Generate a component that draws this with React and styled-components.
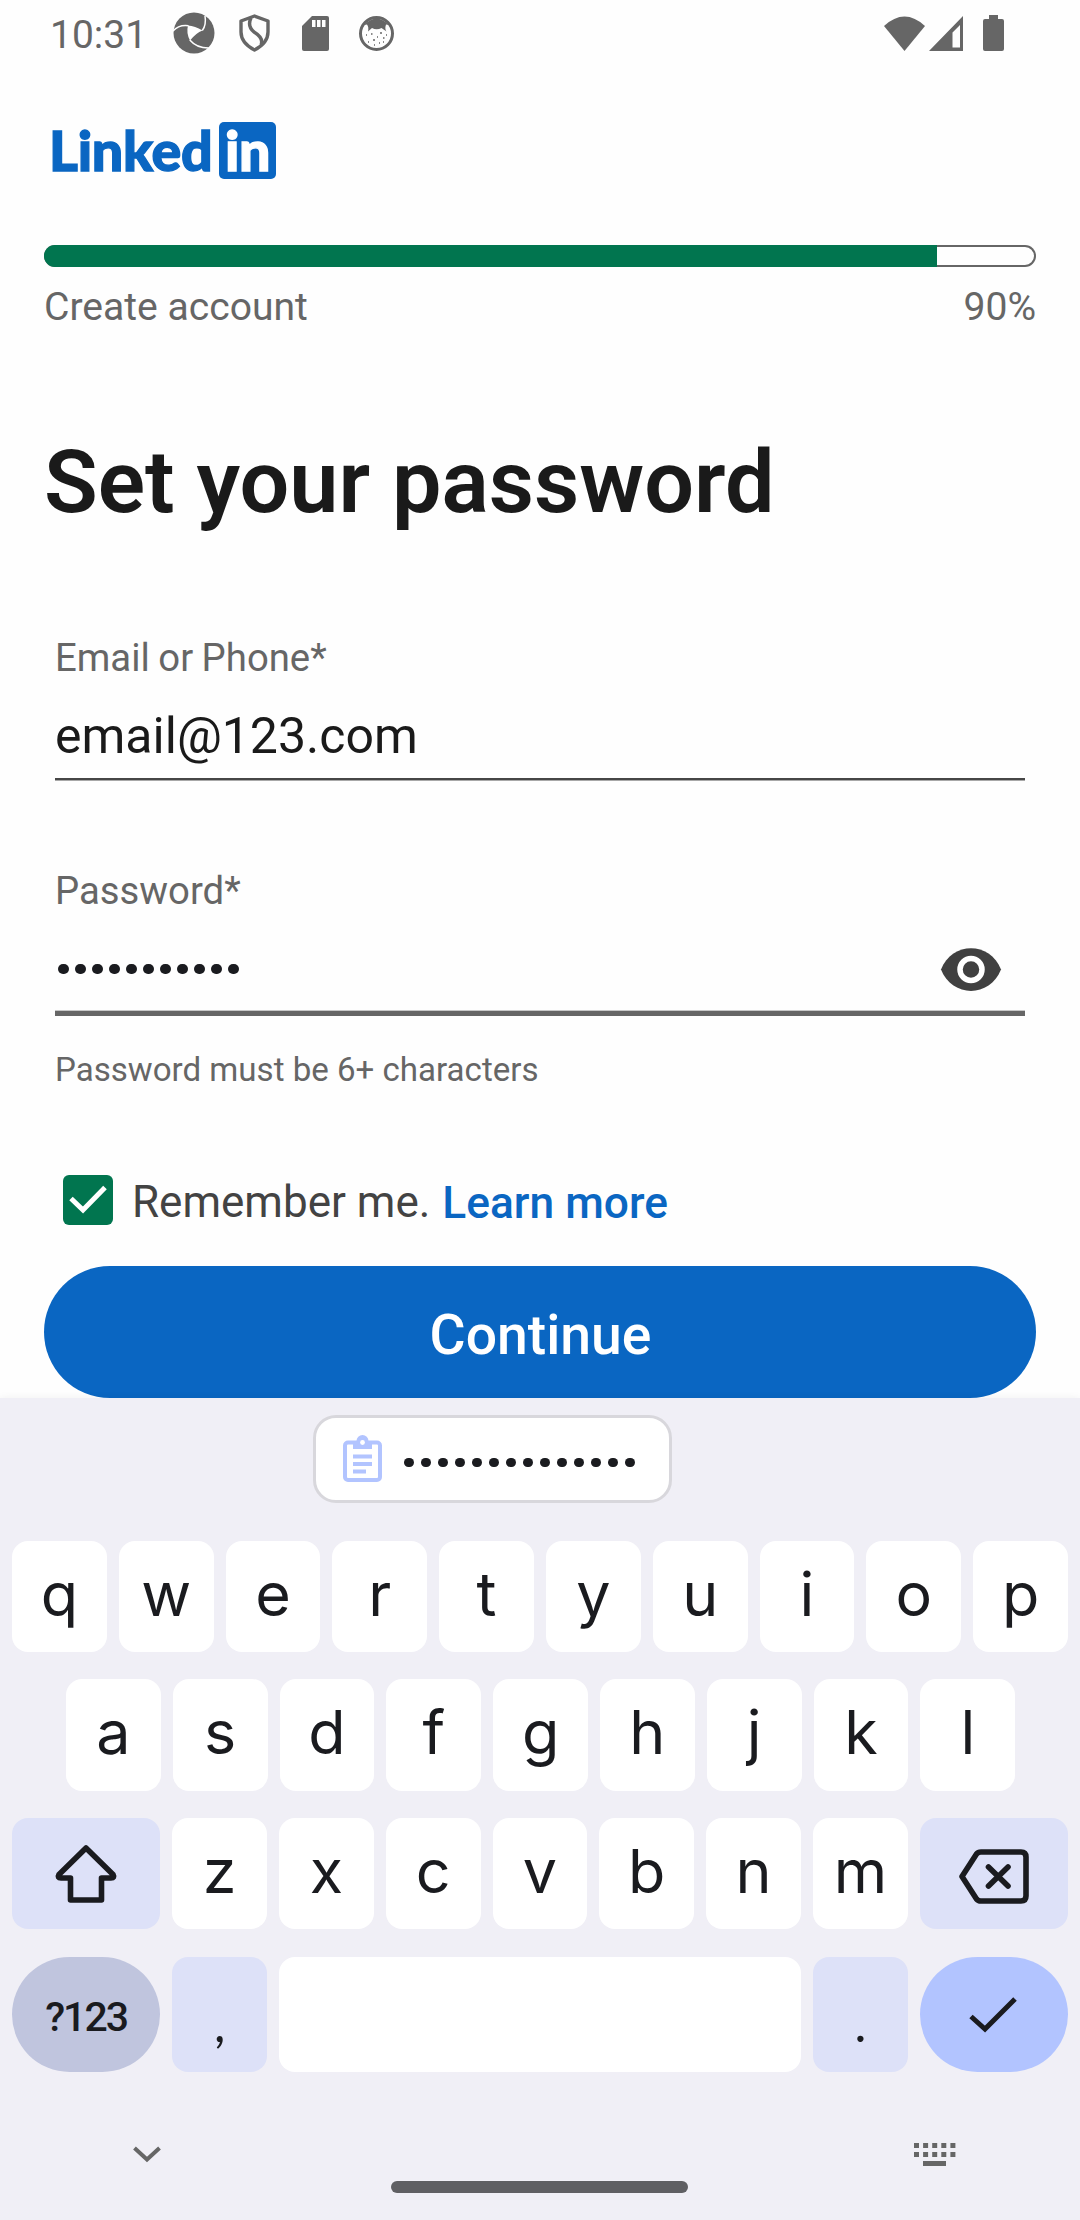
import React from 'react';
import styled, { createGlobalStyle } from 'styled-components';

const GlobalStyle = createGlobalStyle`
  * { box-sizing: border-box; }
  body { margin: 0; background: #fefefe; font-family: Roboto, "Liberation Sans", sans-serif; }
  svg { display: block; flex: none; overflow: visible; }
  button { border: 0; padding: 0; margin: 0; font-family: inherit; }
`;

const Screen = styled.main`
  width: 1080px;
  height: 2220px;
  overflow: hidden;
  display: flex;
  flex-direction: column;
  color: #1a1a1a;
`;

const StatusBar = styled.header`
  height: 66px;
  padding: 0 76px 0 50px;
  display: flex;
  align-items: center;
  justify-content: space-between;
  color: #666;
`;

const StatusGroup = styled.div`
  display: flex;
  align-items: center;
  height: 66px;
`;

const Clock = styled.time`
  width: 123px;
  font-size: 39px;
  line-height: 46px;
  padding-top: 3px;
`;

const Page = styled.section`
  height: 1332px;
  padding: 56px 44px 0;
  display: flex;
  flex-direction: column;
`;

const Brand = styled.div`
  height: 57px;
  margin-left: 8px;
  display: flex;
  color: #0a66c2;
  font-family: Lato, "Open Sans", sans-serif;
  font-weight: 900;
  font-size: 55.5px;
  line-height: 55px;
  -webkit-text-stroke: 1.3px currentColor;
`;

const BrandWord = styled.span`
  width: 167px;
  margin-left: -3px;
  margin-right: 3px;
  letter-spacing: -0.3px;
`;

const BrandTile = styled.span`
  width: 57px;
  height: 57px;
  border-radius: 5px;
  background: #0a66c2;
  color: #fff;
  text-align: center;
  letter-spacing: -0.5px;
`;

const Progress = styled.div`
  margin-top: 66px;
  height: 22px;
  border-radius: 11px;
  overflow: hidden;
  box-shadow: inset 0 0 0 2px #666;
`;

const ProgressFill = styled.div`
  width: 90%;
  height: 22px;
  background: #01754f;
`;

const ProgressLabels = styled.div`
  margin-top: 17px;
  display: flex;
  justify-content: space-between;
  font-size: 39.1px;
  line-height: 46px;
  color: #666;
`;

const Title = styled.h1`
  margin: 100px 0 0 0;
  font-size: 88px;
  line-height: 104px;
  font-weight: 600;
`;

const Field = styled.div`
  margin: ${(p) => p.$gap}px 11px 0;
  height: ${(p) => p.$height}px;
  display: flex;
  flex-direction: column;
  border-bottom: ${(p) => p.$line};
  box-shadow: ${(p) => p.$edge};
`;

const FieldLabel = styled.label`
  font-size: 38.3px;
  line-height: 46px;
  word-spacing: -1px;
  color: #666;
`;

const FieldRow = styled.div`
  margin-top: 25px;
  height: 60px;
  padding-right: 24px;
  display: flex;
  align-items: center;
  justify-content: space-between;
  font-size: 50px;
  line-height: 60px;
`;

const Dots = styled.div`
  display: flex;
  margin: ${(p) => p.$offset || '0'};
  gap: ${(p) => 17.02 - p.$size}px;
`;

const Dot = styled.i`
  width: ${(p) => p.$size}px;
  height: ${(p) => p.$size}px;
  border-radius: 50%;
  background: #1a1b1f;
`;

const Helper = styled.p`
  margin: 34px 11px 0;
  font-size: 33.1px;
  line-height: 40px;
  color: #666;
`;

const Remember = styled.div`
  margin: 85px 0 0 19px;
  height: 50px;
  display: flex;
  align-items: center;
  font-size: 44px;
  line-height: 50px;
  color: #434343;
`;

const Checkbox = styled.span`
  width: 50px;
  height: 50px;
  border-radius: 6px;
  margin-right: 19px;
  background: #01754f;
`;

const RememberText = styled.span`
  padding-top: 4px;
`;

const Link = styled.a`
  margin-left: 12px;
  padding-top: 5px;
  color: #0a66c2;
  font-size: 44.3px;
  font-weight: 500;
`;

const ContinueButton = styled.button`
  margin-top: 41px;
  height: 132px;
  flex: none;
  border-radius: 66px;
  background: #0a66c2;
  color: #fff;
  font-size: 55.3px;
  line-height: 64px;
  font-weight: 500;
  padding: 8px 0 0 1px;
`;

const Keyboard = styled.section`
  height: 822px;
  position: relative;
  background: #f0eff6;
  box-shadow: 0 0 8px rgba(0, 0, 0, 0.06);
  padding: 17px 12px 0;
  display: flex;
  flex-direction: column;
  align-items: stretch;
  color: #1a1b1f;
`;

const ClipSuggestion = styled.button`
  margin-left: 301px;
  width: 359px;
  height: 88px;
  flex: none;
  border: 3px solid #d8d7dc;
  border-radius: 23px;
  background: #fff;
  padding-left: 27px;
  display: flex;
  align-items: center;
  gap: 22px;
`;

const KeyRows = styled.div`
  margin-top: 37.5px;
  display: flex;
  flex-direction: column;
  gap: 27.1px;
`;

const KeyRow = styled.div`
  height: ${(p) => p.$height || 111.6}px;
  padding: 0 ${(p) => p.$inset || 0}px;
  display: flex;
  gap: 12px;
`;

const keyColors = { plain: '#fff', soft: '#dde1f8', mode: '#c0c5de', enter: '#b2c4ff' };

const Key = styled.button`
  width: ${(p) => p.$width || 94.8}px;
  flex: ${(p) => (p.$grow ? '1 1 0' : 'none')};
  height: 100%;
  border-radius: ${(p) => (p.$pill ? 58 : 16)}px;
  background: ${(p) => keyColors[p.$tone || 'plain']};
  color: #1a1b1f;
  display: flex;
  align-items: center;
  justify-content: center;
  font-family: ${(p) => p.$font || 'Inter'}, sans-serif;
  font-weight: ${(p) => (p.$small ? 500 : 400)};
  font-size: ${(p) => p.$size || 61}px;
  line-height: 80px;
  letter-spacing: ${(p) => (p.$small ? -2 : 0)}px;
  padding-top: ${(p) => p.$drop || 0}px;
  padding-bottom: ${(p) => p.$lift || 0}px;
`;

const NavBar = styled.footer`
  margin-top: 71px;
  height: 50.5px;
  padding: 0 112px 0 121px;
  display: grid;
  grid-template-columns: 258px 297px 1fr;
`;

const NavLeft = styled.div`
  padding-top: 3px;
`;

const HomeHandle = styled.div`
  align-self: end;
  height: 12px;
  border-radius: 6px;
  background: #5f5f63;
`;

const NavRight = styled.div`
  display: flex;
  justify-content: flex-end;
`;

const Gap = styled.span`
  width: ${(p) => p.$w}px;
`;

function Aperture() {
  return (
    <svg width="42" height="42" viewBox="0 0 42 42">
      <circle cx="21" cy="21" r="20.5" fill="#666" />
      <path d="M15 13.5Q22 14 29.500 18.500Q23 21 17 28.500Q13 21 15 13.500Z" fill="#fff" />
      <g fill="none" stroke="#fff" strokeWidth="1.5">
        <path d="M0 19Q6 12.500 15.500 13.800M32 4Q33.500 13 29.300 18.500M16.800 28Q24 36.500 37 36" />
      </g>
    </svg>
  );
}

function Shield() {
  return (
    <svg width="31" height="38" viewBox="0 0 31 38" fill="none" stroke="#666" strokeWidth="3.4" strokeLinejoin="round">
      <path d="M15.5 2L29 7V18Q29 29 15.5 36Q2 29 2 18V7Z" />
      <path d="M12 4Q8 12 15 18Q25 24 22 31" />
    </svg>
  );
}

function SdCard() {
  return (
    <svg width="27" height="35" viewBox="0 0 27 35">
      <path d="M10 0H25Q27 0 27 2V33Q27 35 25 35H2Q0 35 0 33V10Z" fill="#666" />
      <path d="M10 4H13.5V11H10ZM15 4H18.5V11H15ZM20 4H23.5V11H20Z" fill="#fff" />
    </svg>
  );
}

function Face() {
  return (
    <svg width="35" height="35" viewBox="0 0 35 35">
      <circle cx="17.5" cy="17.5" r="16" fill="none" stroke="#666" strokeWidth="3" />
      <path d="M5 9Q17.500 -4 30 9L27 8.500Q25.500 13 27.500 15.500L22.500 12Q17.500 14.500 13 12L9 15.500Q10 11 8 8.500Z" fill="#666" />
      <path d="M7 19h1M12 18h1.500M21 17h2M14 24h2M24 22h1.500M9 26h1M20 27h1M18 21h1M27 19h1M15 29h1M24 26h1" stroke="#666" strokeWidth="1.3" />
    </svg>
  );
}

function Clipboard() {
  return (
    <svg width="39" height="46" viewBox="0 0 39 46">
      <rect x="2" y="6.5" width="35" height="37.500" rx="3" fill="none" stroke="#b2c4ff" strokeWidth="4" />
      <path d="M10 13V5H13.5A6 6 0 0 1 25.5 5H29V13Z" fill="#b2c4ff" />
      <circle cx="19.5" cy="6.5" r="2.4" fill="#fff" />
      <path d="M10 20.500H29M10 28H29M10 35.500H23" stroke="#b2c4ff" strokeWidth="4" />
    </svg>
  );
}

function DotRun({ count, size, offset }) {
  return (
    <Dots $size={size} $offset={offset}>
      {Array.from({ length: count }, (_, i) => <Dot key={i} $size={size} />)}
    </Dots>
  );
}

const BackspaceIcon = styled.svg`
  margin-top: 5px;
`;

const letters = (text) => text.split('').map((c) => <Key key={c} $lift={5}>{c}</Key>);

export default function App() {
  return (
    <Screen>
      <GlobalStyle />
      <StatusBar>
        <StatusGroup>
          <Clock>10:31</Clock>
          <Aperture />
          <Gap $w={24} />
          <Shield />
          <Gap $w={32} />
          <SdCard />
          <Gap $w={30} />
          <Face />
        </StatusGroup>
        <StatusGroup>
          <svg width="41" height="35" viewBox="0 0 41 35"><path d="M0 10Q20.500 -9 41 10L20.500 35Z" fill="#666" /></svg>
          <Gap $w={4} />
          <svg width="34" height="35" viewBox="0 0 34 35">
            <path fillRule="evenodd" d="M34 0V35H0ZM31 9L23.500 16.500V31.500H31Z" fill="#666" />
          </svg>
          <Gap $w={20} />
          <svg width="21" height="36" viewBox="0 0 21 36">
            <path d="M6 0H15V4H19Q21 4 21 6V34Q21 36 19 36H2Q0 36 0 34V6Q0 4 2 4H6Z" fill="#666" />
          </svg>
        </StatusGroup>
      </StatusBar>

      <Page>
        <Brand>
          <BrandWord>Linked</BrandWord>
          <BrandTile>in</BrandTile>
        </Brand>
        <Progress><ProgressFill /></Progress>
        <ProgressLabels><span>Create account</span><span>90%</span></ProgressLabels>
        <Title>Set your password</Title>
        <Field $gap={101} $height={145} $line="2px solid #464646" $edge="0 1px 0 #a8a8a8">
          <FieldLabel>Email or Phone*</FieldLabel>
          <FieldRow>email@123.com</FieldRow>
        </Field>
        <Field $gap={88} $height={148} $line="5px solid #666" $edge="inset 0 -1px 0 #c8c8c8">
          <FieldLabel>Password*</FieldLabel>
          <FieldRow>
            <DotRun count={11} size={10.6} offset="0 0 0 3px" />
            <svg width="60" height="43" viewBox="0 0 60 43">
              <path d="M0 21.500C11 -7 49 -7 60 21.500C49 50 11 50 0 21.500Z" fill="#404040" />
              <circle cx="30" cy="21.500" r="11" fill="#404040" stroke="#fff" strokeWidth="5.500" />
            </svg>
          </FieldRow>
        </Field>
        <Helper>Password must be 6+ characters</Helper>
        <Remember>
          <Checkbox>
            <svg width="50" height="50" viewBox="0 0 50 50">
              <path d="M8 23.500L20 35L42 12.500" fill="none" stroke="#fff" strokeWidth="5" />
            </svg>
          </Checkbox>
          <RememberText>Remember me.</RememberText>
          <Link>Learn more</Link>
        </Remember>
        <ContinueButton>Continue</ContinueButton>
      </Page>

      <Keyboard>
        <ClipSuggestion>
          <Clipboard />
          <DotRun count={14} size={9.8} offset="7px 0 0 0" />
        </ClipSuggestion>
        <KeyRows>
          <KeyRow>{letters('qwertyuiop')}</KeyRow>
          <KeyRow $inset={54}>{letters('asdfghjkl')}</KeyRow>
          <KeyRow>
            <Key $tone="soft" $width={148.2} aria-label="Shift">
              <svg width="62" height="58" viewBox="0 0 62 58" fill="none" stroke="#1a1b1f" strokeWidth="5.600" strokeLinejoin="round">
                <path d="M31 3L4 29.500Q2 33 6 33H15.500V55H46.500V33H56Q60 33 58 29.500Z" />
              </svg>
            </Key>
            {letters('zxcvbnm')}
            <Key $tone="soft" $width={148.2} aria-label="Backspace">
              <BackspaceIcon width="70" height="55" viewBox="0 0 70 55" fill="none" stroke="#1a1b1f" strokeWidth="5.600" strokeLinejoin="round">
                <path d="M3 27.500L17.500 5Q19 3 22 3H62Q67 3 67 8V47Q67 52 62 52H22Q19 52 17.500 50Z" />
                <path d="M29.500 18L49 37M49 18L29.500 37" strokeLinecap="round" />
              </BackspaceIcon>
            </Key>
          </KeyRow>
          <KeyRow $height={115}>
            <Key $tone="mode" $pill $small $font="Roboto" $size={41} $width={148.2} $drop={5}>?123</Key>
            <Key $tone="soft" $font="Lato" $size={50} $drop={17}>,</Key>
            <Key $grow aria-label="Space" />
            <Key $tone="soft" $font="Lato" $size={50} $drop={17}>.</Key>
            <Key $tone="enter" $pill $width={148.2} aria-label="Done">
              <svg width="49" height="37" viewBox="0 0 49 37">
                <path d="M2 20.500L16 33L46 3" fill="none" stroke="#1a1b1f" strokeWidth="5" />
              </svg>
            </Key>
          </KeyRow>
        </KeyRows>
        <NavBar>
          <NavLeft>
            <svg width="28" height="17" viewBox="0 0 28 17">
              <path d="M1.500 2L14 13.500L26.500 2" fill="none" stroke="#666" strokeWidth="4" />
            </svg>
          </NavLeft>
          <HomeHandle />
          <NavRight>
            <svg width="42" height="23" viewBox="0 0 42 23" fill="#666">
              {[0, 1, 2, 3, 4].map((i) => (
                <g key={i}>
                  <rect x={i * 9.1} y="0" width="5" height="5" />
                  <rect x={i * 9.1} y="9" width="5" height="5" />
                </g>
              ))}
              <rect x="9" y="18" width="23" height="5" />
            </svg>
          </NavRight>
        </NavBar>
      </Keyboard>
    </Screen>
  );
}
